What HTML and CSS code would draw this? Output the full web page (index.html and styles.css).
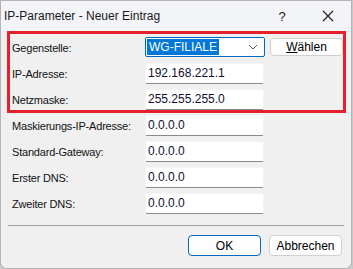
FILE: index.html
```html
<!DOCTYPE html>
<html lang="de">
<head>
  <meta charset="UTF-8">
  <title>IP-Parameter - Neuer Eintrag</title>
  <link rel="stylesheet" href="styles.css">
</head>
<body>
  <div class="window">
    <div class="titlebar">
      <span class="title">IP-Parameter - Neuer Eintrag</span>
      <span class="help">?</span>
      <span class="close">
        <svg width="12" height="12" viewBox="0 0 12 12"><path d="M1 1 L11 11 M11 1 L1 11" stroke="#1a1a1a" stroke-width="1.1" fill="none"/></svg>
      </span>
    </div>

    <div class="content">
      <div class="highlight">
        <div class="row">
          <label>Gegenstelle:</label>
          <div class="combo">
            <span class="selected">WG-FILIALE</span>
            <svg class="chevron" width="10" height="6" viewBox="0 0 10 6"><path d="M1 1 L5 5 L9 1" stroke="#555" stroke-width="1" fill="none"/></svg>
          </div>
          <button class="btn small"><u>W</u>ählen</button>
        </div>
        <div class="row">
          <label>IP-Adresse:</label>
          <div class="field">192.168.221.1</div>
        </div>
        <div class="row">
          <label>Netzmaske:</label>
          <div class="field">255.255.255.0</div>
        </div>
      </div>

      <div class="rows">
        <div class="row">
          <label>Maskierungs-IP-Adresse:</label>
          <div class="field">0.0.0.0</div>
        </div>
        <div class="row">
          <label>Standard-Gateway:</label>
          <div class="field">0.0.0.0</div>
        </div>
        <div class="row">
          <label>Erster DNS:</label>
          <div class="field">0.0.0.0</div>
        </div>
        <div class="row">
          <label>Zweiter DNS:</label>
          <div class="field">0.0.0.0</div>
        </div>
      </div>

      <div class="separator"></div>

      <div class="buttons">
        <button class="btn default">OK</button>
        <button class="btn">Abbrechen</button>
      </div>
    </div>
  </div>
</body>
</html>
```

FILE: styles.css
```css
body {
  margin: 0;
  padding: 0;
  background: #c8c8c8;
  font-family: 'Liberation Sans', Arial, sans-serif;
  font-size: 12px;
  color: #000;
}

.window {
  width: 350px;
  height: 267px;
  background: #f0f0f0;
  border: 1px solid #b4b4b4;
  border-radius: 0 0 7px 7px;
  overflow: hidden;
}

.titlebar {
  height: 30px;
  display: flex;
  align-items: center;
  background: #f3f4f8;
}

.title {
  font-family: 'Liberation Sans', Arial, sans-serif;
  font-size: 12px;
  padding-left: 3px;
  flex: 1;
  color: #1a1a1a;
}

.help {
  font-family: 'Liberation Sans', Arial, sans-serif;
  font-size: 13px;
  width: 46px;
  text-align: center;
  color: #1a1a1a;
}

.close {
  width: 46px;
  display: flex;
  justify-content: center;
}

.content {
  padding: 0 5px 0 6px;
}

.highlight {
  border: 3px solid #e3202c;
  padding: 3px 0 1px 2px;
  display: flex;
  flex-direction: column;
  gap: 6px;
}

.rows {
  padding: 2px 0 0 5px;
  display: flex;
  flex-direction: column;
  gap: 6px;
}

.row {
  display: flex;
  align-items: center;
  height: 20px;
}

.row label {
  width: 133px;
  flex: none;
  padding-top: 1px;
  font-size: 11px;
  letter-spacing: -0.2px;
  white-space: nowrap;
  color: #111;
}

.field {
  width: 115px;
  height: 19px;
  background: #fff;
  border: 1px solid #f4f4f4;
  border-bottom: 1px solid #8a8a8a;
  border-radius: 2px;
  padding-left: 2px;
  display: flex;
  align-items: center;
  font-size: 12px;
  color: #101030;
}

.combo {
  width: 116px;
  height: 18px;
  background: #fff;
  border: 1px solid #0067c0;
  border-radius: 2px;
  display: flex;
  align-items: center;
  padding: 0 1px;
}

.selected {
  background: #0078d7;
  color: #fff;
  height: 16px;
  line-height: 16px;
  padding: 0 2px;
  width: 68px;
}

.chevron {
  margin-left: auto;
  margin-right: 5px;
}

.btn {
  font-family: 'Liberation Sans', Arial, sans-serif;
  font-size: 12px;
  color: #000;
  background: #fdfdfd;
  border: 1px solid #d0d0d0;
  border-radius: 4px;
  width: 73px;
  height: 21px;
  padding: 0;
}

.btn.small {
  height: 18px;
  margin-left: 5px;
}

.btn.default {
  border-color: #0067c0;
}

.separator {
  height: 1px;
  background: #a0a0a0;
  margin: 12px 2px 0 1px;
}

.buttons {
  display: flex;
  justify-content: flex-end;
  gap: 8px;
  padding: 9px 4px 0 0;
}
```
